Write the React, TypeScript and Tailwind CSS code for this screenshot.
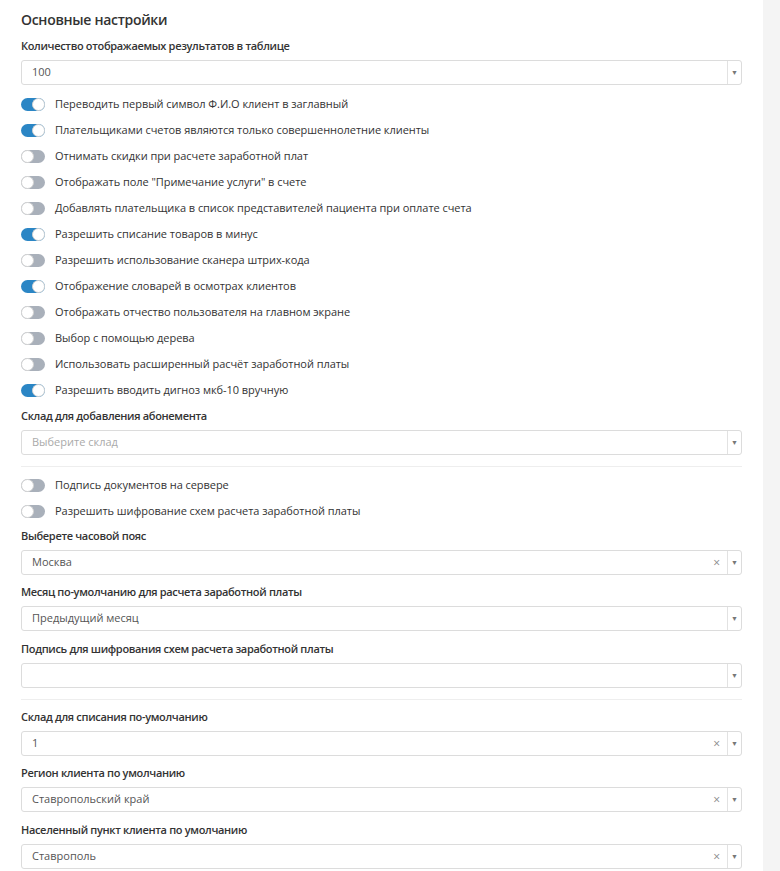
import type { ReactNode } from 'react'

type Toggle = { label: string; on: boolean }

const mainToggles: Toggle[] = [
  { label: 'Переводить первый символ Ф.И.О клиент в заглавный', on: true },
  { label: 'Плательщиками счетов являются только совершеннолетние клиенты', on: true },
  { label: 'Отнимать скидки при расчете заработной плат', on: false },
  { label: 'Отображать поле "Примечание услуги" в счете', on: false },
  { label: 'Добавлять плательщика в список представителей пациента при оплате счета', on: false },
  { label: 'Разрешить списание товаров в минус', on: true },
  { label: 'Разрешить использование сканера штрих-кода', on: false },
  { label: 'Отображение словарей в осмотрах клиентов', on: true },
  { label: 'Отображать отчество пользователя на главном экране', on: false },
  { label: 'Выбор с помощью дерева', on: false },
  { label: 'Использовать расширенный расчёт заработной платы', on: false },
  { label: 'Разрешить вводить дигноз мкб-10 вручную', on: true },
]

function Switch({ on }: { on: boolean }) {
  return (
    <div
      className={`relative h-[13px] w-[24px] rounded-full ${on ? 'bg-[#2b86c5]' : 'bg-[#a9b0ba]'}`}
    >
      <div
        className={`absolute top-0 h-[13px] w-[13px] rounded-full border border-[#d4d4d4] bg-white ${on ? 'right-0' : 'left-0'}`}
      />
    </div>
  )
}

function ToggleRow({ label, on }: Toggle) {
  return (
    <div className="flex h-[26px] items-center gap-[10px]">
      <Switch on={on} />
      <span className="text-[11px] tracking-[-0.05px] text-[#333]">{label}</span>
    </div>
  )
}

function Select({ value, placeholder, clearable }: { value?: string; placeholder?: string; clearable?: boolean }) {
  return (
    <div className="flex h-[25px] items-center rounded-[3px] border border-[#dcdcdc] bg-white">
      <div className="flex-1 truncate pl-[10px] text-[11px]">
        {value ? (
          <span className="text-[#555]">{value}</span>
        ) : (
          <span className="text-[#aaa]">{placeholder}</span>
        )}
      </div>
      {clearable && <span className="mr-[7px] text-[12px] leading-none text-[#888]">×</span>}
      <div className="flex h-full w-[14px] items-center justify-center border-l border-[#e2e2e2]">
        <span className="text-[7px] leading-none text-[#777]">▼</span>
      </div>
    </div>
  )
}

function Field({ label, children, className = '' }: { label: string; children: ReactNode; className?: string }) {
  return (
    <div className={className}>
      <div className="h-[16px] text-[11px] font-semibold leading-[16px] tracking-[-0.33px] text-[#333]">
        {label}
      </div>
      <div className="mt-[6px]">{children}</div>
    </div>
  )
}

export default function App() {
  return (
    <div className="flex min-h-[871px] bg-[#f4f4f4] font-['Open_Sans',sans-serif]">
      <div className="w-[763px] bg-white pb-4 pl-[21px] pr-[21px]">
        {/* Header */}
        <h1 className="mt-[11px] h-[18px] text-[14px] font-semibold leading-[18px] tracking-[-0.3px] text-[#333]">
          Основные настройки
        </h1>

        <Field label="Количество отображаемых результатов в таблице" className="mt-[9px]">
          <Select value="100" />
        </Field>

        <div className="mt-[6px]">
          {mainToggles.map((t) => (
            <ToggleRow key={t.label} {...t} />
          ))}
        </div>

        <Field label="Склад для добавления абонемента" className="mt-[5px]">
          <Select placeholder="Выберите склад" />
        </Field>

        <div className="mt-[11px] h-px bg-[#eeeeee]" />

        <div className="mt-[5px]">
          <ToggleRow label="Подпись документов на сервере" on={false} />
          <ToggleRow label="Разрешить шифрование схем расчета заработной платы" on={false} />
        </div>

        <Field label="Выберете часовой пояс" className="mt-[4px]">
          <Select value="Москва" clearable />
        </Field>
        <Field label="Месяц по-умолчанию для расчета заработной платы" className="mt-[9px]">
          <Select value="Предыдущий месяц" />
        </Field>
        <Field label="Подпись для шифрования схем расчета заработной платы" className="mt-[10px]">
          <Select />
        </Field>

        <div className="mt-[11px] h-px bg-[#eeeeee]" />

        <Field label="Склад для списания по-умолчанию" className="mt-[9px]">
          <Select value="1" clearable />
        </Field>
        <Field label="Регион клиента по умолчанию" className="mt-[9px]">
          <Select value="Ставропольский край" clearable />
        </Field>
        <Field label="Населенный пункт клиента по умолчанию" className="mt-[10px]">
          <Select value="Ставрополь" clearable />
        </Field>
      </div>
    </div>
  )
}
